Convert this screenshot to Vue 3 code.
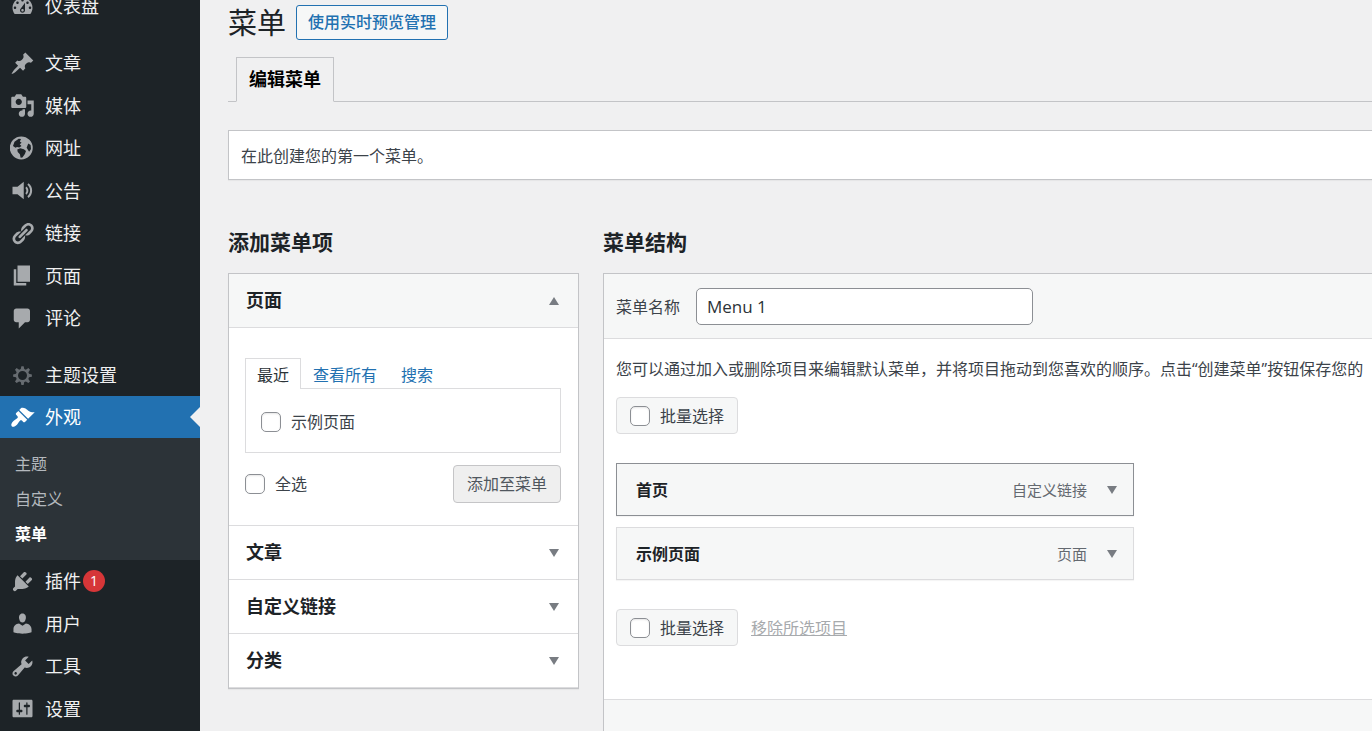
<script setup>
import { ref } from 'vue'

const icons = {
  dashboard: 'M3.76 16h12.48c1.11-1.37 1.76-3.12 1.76-5 0-4.42-3.58-8-8-8s-8 3.58-8 8c0 1.88.66 3.63 1.76 5zM10 4c.55 0 1 .45 1 1s-.45 1-1 1-1-.45-1-1 .45-1 1-1zM6 6c.55 0 1 .45 1 1s-.45 1-1 1-1-.45-1-1 .45-1 1-1zm8 0c.55 0 1 .45 1 1s-.45 1-1 1-1-.45-1-1 .45-1 1-1zm-5.37 5.55L12 7v6c0 1.1-.9 2-2 2s-2-.9-2-2c0-.57.24-1.08.63-1.45zM4 10c.55 0 1 .45 1 1s-.45 1-1 1-1-.45-1-1 .45-1 1-1zm12 0c.55 0 1 .45 1 1s-.45 1-1 1-1-.45-1-1 .45-1 1-1zm-5 3c0-.55-.45-1-1-1s-1 .45-1 1 .45 1 1 1 1-.45 1-1z',
  post: 'M10.44 3.02l1.82-1.82 6.36 6.35-1.83 1.82c-1.05-.68-2.48-.57-3.41.36l-.75.75c-.92.93-1.04 2.35-.35 3.41l-1.83 1.82-2.41-2.41-2.8 2.79c-.42.42-3.38 2.71-3.8 2.29s1.86-3.39 2.28-3.81l2.79-2.79L4.1 9.36l1.83-1.82c1.05.69 2.48.57 3.4-.36l.75-.75c.93-.92 1.05-2.35.36-3.41z',
  media: 'M13 11V4c0-.55-.45-1-1-1h-1.67L9 1H5L3.67 3H2c-.55 0-1 .45-1 1v7c0 .55.45 1 1 1h10c.55 0 1-.45 1-1zM7 4.5c1.38 0 2.5 1.12 2.5 2.5S8.38 9.5 7 9.5 4.5 8.38 4.5 7 5.62 4.5 7 4.5zM14 6h5v10.5c0 1.38-1.12 2.5-2.5 2.5S14 17.88 14 16.5s1.12-2.5 2.5-2.5c.17 0 .34.02.5.05V9h-3V6zm-4 8.05V13h2v3.5c0 1.38-1.12 2.5-2.5 2.5S7 17.88 7 16.5 8.12 14 9.5 14c.17 0 .34.02.5.05z',
  site: 'M9 .3a9.2 9.2 0 1 0 .01 18.4A9.2 9.2 0 0 0 9 .3zM2.400 8L3.600 4.600 7 2.200l1.800.2-.9 1.900 1.400 1-1.500 1.300 1.400 1.300-1.800 1.200L5.600 8.700 4.400 9.400zM5.800 10.800l2.400-1.100 2.900.8 1.700 1.500-.9 2.300-2 2.800-1.400.3-.6-2.800-1.700-1.900zM13.300 9.300l1.300-3.400 1.900 1.300.3 3.200-1.500 2.200z',
  volume: 'M2 7h4l5-4v14l-5-4H2zM12.300 7.900l.9-1.200c2 1.700 2 4.900 0 6.600l-.9-1.200c1.100-1.200 1.100-3 0-4.200zM13.900 5.400l.9-1.300c3.900 3 3.900 8.800 0 11.800l-.9-1.300c2.900-2.500 2.900-6.700 0-9.200z',
  links: 'M17.74 2.76c1.68 1.69 1.68 4.41 0 6.1l-1.53 1.52c-1.12 1.12-2.7 1.47-4.14 1.09l2.62-2.61.76-.77.76-.76c.84-.84.84-2.2 0-3.04-.84-.85-2.2-.85-3.04 0l-.77.76-3.38 3.38c-.37-1.44-.02-3.02 1.1-4.14l1.52-1.53c1.69-1.68 4.42-1.68 6.1 0zM8.59 13.43l5.34-5.34c.42-.42.42-1.1 0-1.52-.44-.43-1.13-.39-1.53 0l-5.33 5.34c-.42.42-.42 1.1 0 1.52.44.43 1.13.39 1.52 0zm-.76 2.29l4.14-4.15c.38 1.44.03 3.02-1.09 4.14l-1.52 1.53c-1.69 1.68-4.41 1.68-6.1 0-1.68-1.68-1.68-4.42 0-6.1l1.53-1.52c1.12-1.12 2.7-1.47 4.14-1.1l-4.14 4.15c-.85.84-.85 2.2 0 3.05.84.84 2.2.84 3.04 0z',
  page: 'M6 15V2h10v13H6zm-1 1h8v2H3V5h2v11z',
  comments: 'M5 2h9c1.1 0 2 .9 2 2v7c0 1.1-.9 2-2 2h-2l-5 5v-5H5c-1.1 0-2-.9-2-2V4c0-1.1.9-2 2-2z',
  gear: 'M9.100 2.500h1.800l.5 2.300 1.300.5 2-1.300 1.300 1.300-1.300 2 .5 1.300 2.300.5v1.800l-2.300.5-.5 1.300 1.300 2-1.300 1.300-2-1.300-1.300.5-.5 2.300H9.100l-.5-2.300-1.300-.5-2 1.300L4 14.700l1.300-2-.5-1.300-2.300-.5V9.100l2.300-.5.5-1.300L4 5.300 5.300 4l2 1.300 1.300-.5zM10 6.400a3.600 3.600 0 1 0 0 7.200 3.600 3.600 0 0 0 0-7.200z',
  appearance: 'M14.48 11.06L7.41 3.99l1.5-1.5c.5-.56 2.3-.47 3.51.32 1.21.8 1.43 1.28 2.91 2.1 1.18.64 2.45 1.26 4.45.85zm-.71.71L6.7 4.7 4.93 6.47c-.39.39-.39 1.02 0 1.41l1.06 1.06c.39.39.39 1.03 0 1.42-.6.6-1.43 1.11-2.21 1.69-.35.26-.7.53-1.01.84C1.43 14.23.4 16.08 1.4 17.07c.99 1 2.84-.03 4.18-1.36.31-.31.58-.66.85-1.02.57-.78 1.08-1.61 1.69-2.21.39-.39 1.02-.39 1.41 0l1.06 1.06c.39.39 1.02.39 1.41 0z',
  plugins: 'M13.11 4.36L9.87 7.6 8 5.73l3.24-3.24c.35-.34 1.05-.2 1.56.32.52.51.66 1.21.31 1.55zm-8 1.77l.91-1.12 9.01 9.01-1.19.84c-.71.71-2.63 1.16-3.82 1.16H6.14L4.9 17.26c-.59.59-1.54.59-2.12 0-.59-.58-.59-1.53 0-2.12l1.24-1.24v-3.88c0-1.13.4-3.19 1.09-3.89zm7.26 3.97l3.24-3.24c.34-.35 1.04-.21 1.55.31.52.51.66 1.21.31 1.55l-3.24 3.25z',
  users: 'M10 9.25c-2.27 0-2.73-3.44-2.73-3.44C7 4.02 7.82 2 9.97 2c2.16 0 2.98 2.02 2.71 3.81 0 0-.41 3.44-2.68 3.44zm0 2.57L12.72 10c2.39 0 4.52 2.33 4.52 4.53v2.49s-3.65 1.13-7.24 1.13c-3.65 0-7.24-1.13-7.24-1.13v-2.49c0-2.25 1.94-4.48 4.47-4.48z',
  tools: 'M16.68 9.77c-1.34 1.34-3.3 1.67-4.95.99l-5.41 6.52c-.99.99-2.59.99-3.58 0s-.99-2.59 0-3.57l6.52-5.42c-.68-1.65-.35-3.61.99-4.95 1.28-1.28 3.12-1.62 4.72-1.06l-2.89 2.89 2.82 2.82 2.86-2.87c.53 1.58.18 3.39-1.08 4.65zM3.81 16.21c.4.39 1.04.39 1.43 0 .4-.4.4-1.04 0-1.43-.39-.4-1.03-.4-1.43 0-.39.39-.39 1.03 0 1.43z',
  settings: 'M18 16V4c0-.55-.45-1-1-1H3c-.55 0-1 .45-1 1v12c0 .55.45 1 1 1h14c.55 0 1-.45 1-1zM8 11h1c.55 0 1 .45 1 1s-.45 1-1 1H8v1.5c0 .28-.22.5-.5.5s-.5-.22-.5-.5V13H6c-.55 0-1-.45-1-1s.45-1 1-1h1V5.5c0-.28.22-.5.5-.5s.5.22.5.5V11zm5-2h-1c-.55 0-1-.45-1-1s.45-1 1-1h1V5.5c0-.28.22-.5.5-.5s.5.22.5.5V7h1c.55 0 1 .45 1 1s-.45 1-1 1h-1v5.5c0 .28-.22.5-.5.5s-.5-.22-.5-.5V9z',
}

const groups = [
  [{ icon: 'dashboard', label: '仪表盘' }],
  [
    { icon: 'post', label: '文章' },
    { icon: 'media', label: '媒体' },
    { icon: 'site', label: '网址' },
    { icon: 'volume', label: '公告' },
    { icon: 'links', label: '链接' },
    { icon: 'page', label: '页面' },
    { icon: 'comments', label: '评论' },
  ],
  [
    { icon: 'gear', label: '主题设置', dim: true },
    { icon: 'appearance', label: '外观', current: true, children: ['主题', '自定义', '菜单'] },
    { icon: 'plugins', label: '插件', count: 1 },
    { icon: 'users', label: '用户' },
    { icon: 'tools', label: '工具' },
    { icon: 'settings', label: '设置' },
  ],
]

const closedSections = ['文章', '自定义链接', '分类']
const menuItems = [
  { title: '首页', type: '自定义链接', active: true },
  { title: '示例页面', type: '页面' },
]

const menuName = ref('Menu 1')
const samplePage = ref(false)
const selectAll = ref(false)
const bulkTop = ref(false)
const bulkBottom = ref(false)
</script>

<template>
  <div class="shell">
    <nav class="sidebar" aria-label="主菜单">
      <ul v-for="(group, g) in groups" :key="g" class="group">
        <li v-for="item in group" :key="item.label">
          <a href="#" class="nav-link" :class="{ current: item.current }">
            <svg class="nav-icon" :class="{ dim: item.dim }" viewBox="0 0 20 20" aria-hidden="true">
              <path :d="icons[item.icon]" fill-rule="evenodd" />
            </svg>
            <span>{{ item.label }}</span>
            <span v-if="item.count" class="badge">{{ item.count }}</span>
          </a>
          <ul v-if="item.children" class="submenu">
            <li v-for="child in item.children" :key="child">
              <a href="#" :class="{ selected: child === '菜单' }">{{ child }}</a>
            </li>
          </ul>
        </li>
      </ul>
    </nav>

    <main class="content">
      <header class="title-row">
        <h1>菜单</h1>
        <a href="#" class="preview-link">使用实时预览管理</a>
      </header>

      <nav class="page-tabs" aria-label="次要菜单">
        <a href="#" class="page-tab">编辑菜单</a>
      </nav>

      <p class="notice">在此创建您的第一个菜单。</p>

      <div class="columns">
        <section class="add-items">
          <h2>添加菜单项</h2>
          <div class="accordion">
            <button type="button" class="section-head open" aria-expanded="true">
              页面
              <svg class="arrow" viewBox="0 0 10 8" aria-hidden="true"><path d="M0 8L5 0l5 8z" /></svg>
            </button>
            <div class="section-body">
              <div class="tabs">
                <a href="#" class="tab active">最近</a>
                <a href="#" class="tab">查看所有</a>
                <a href="#" class="tab">搜索</a>
              </div>
              <div class="tab-panel">
                <label class="check"><input v-model="samplePage" type="checkbox" />示例页面</label>
              </div>
              <div class="actions">
                <label class="check"><input v-model="selectAll" type="checkbox" />全选</label>
                <button type="button" class="add-button">添加至菜单</button>
              </div>
            </div>
            <button
              v-for="name in closedSections"
              :key="name"
              type="button"
              class="section-head"
              aria-expanded="false"
            >
              {{ name }}
              <svg class="arrow" viewBox="0 0 10 8" aria-hidden="true"><path d="M0 0h10L5 8z" /></svg>
            </button>
          </div>
        </section>

        <section class="structure">
          <h2>菜单结构</h2>
          <div class="editor">
            <div class="editor-head">
              <label for="menu-name">菜单名称</label>
              <input id="menu-name" v-model="menuName" type="text" />
            </div>
            <div class="editor-body">
              <p class="hint">您可以通过加入或删除项目来编辑默认菜单，并将项目拖动到您喜欢的顺序。点击“创建菜单”按钮保存您的</p>
              <label class="check bulk"><input v-model="bulkTop" type="checkbox" />批量选择</label>
              <ul class="menu-items">
                <li v-for="item in menuItems" :key="item.title" class="menu-item" :class="{ active: item.active }">
                  <span class="item-title">{{ item.title }}</span>
                  <span class="item-type">{{ item.type }}</span>
                  <svg class="arrow" viewBox="0 0 10 8" aria-hidden="true"><path d="M0 0h10L5 8z" /></svg>
                </li>
              </ul>
              <div class="bulk-row">
                <label class="check bulk"><input v-model="bulkBottom" type="checkbox" />批量选择</label>
                <a href="#" class="remove-link">移除所选项目</a>
              </div>
            </div>
            <div class="editor-foot"></div>
          </div>
        </section>
      </div>
    </main>
  </div>
</template>

<style>
body {
  background: #f0f0f1;
}
</style>

<style scoped>
.shell,
.shell * {
  box-sizing: border-box;
}

.shell {
  display: flex;
  height: 100vh;
  overflow: hidden;
  background: #f0f0f1;
  color: #3c434a;
  font-family: "Open Sans", "Noto Sans CJK SC", sans-serif;
  font-size: 16px;
  line-height: 24px;
}

ul {
  margin: 0;
  padding: 0;
  list-style: none;
}

a {
  color: #2271b1;
  text-decoration: none;
}

button,
input {
  font: inherit;
}

h1,
h2,
p {
  margin: 0;
}

.sidebar {
  flex: 0 0 200px;
  background: #1d2327;
}

.group:first-child {
  margin-top: -15px;
}

.group + .group {
  margin-top: 15px;
}

.nav-link {
  position: relative;
  display: flex;
  align-items: center;
  height: 42px;
  padding-left: 10px;
  color: #f0f0f1;
  font-size: 18px;
}

.group > li:nth-child(even) > .nav-link {
  height: 43px;
}

.nav-link.current,
.group > li:nth-child(even) > .nav-link.current {
  height: 42px;
  background: #2271b1;
  color: #fff;
}

.nav-link.current::after {
  content: "";
  position: absolute;
  right: 0;
  top: 11px;
  border: 10px solid transparent;
  border-left-width: 0;
  border-right-color: #f0f0f1;
}

.nav-icon {
  width: 25px;
  height: 25px;
  margin-right: 10px;
  fill: #a7aaad;
}

.nav-icon.dim {
  fill: #666b70;
}

.current .nav-icon {
  fill: #fff;
}

.badge {
  min-width: 22px;
  height: 22px;
  margin-left: 2px;
  border-radius: 11px;
  background: #d63638;
  color: #fff;
  font-size: 14px;
  line-height: 22px;
  text-align: center;
}

.submenu {
  padding: 9px 0 8px;
  background: #2c3338;
}

.submenu a {
  display: block;
  padding: 5px 15px;
  color: #b4b9be;
  line-height: 25px;
}

.submenu a.selected {
  color: #fff;
  font-weight: 600;
}

.content {
  flex: 1;
  min-width: 0;
  padding: 5px 0 0 28px;
}

.title-row {
  display: flex;
  align-items: center;
  gap: 10px;
}

h1 {
  color: #1d2327;
  font-size: 29px;
  font-weight: 400;
  line-height: 35px;
}

.preview-link {
  padding: 5px 11px;
  border: 1px solid #2271b1;
  border-radius: 3px;
  background: #f6f7f7;
  font-weight: 500;
  line-height: 23px;
}

.page-tabs {
  display: flex;
  margin-top: 17px;
  padding-left: 8px;
  border-bottom: 1px solid #c3c4c7;
}

.page-tab {
  margin-bottom: -1px;
  padding: 8px 12px;
  border: 1px solid #c3c4c7;
  border-bottom-color: #f0f0f1;
  color: #000;
  font-size: 18px;
  font-weight: 600;
  line-height: 27px;
}

.notice {
  margin-top: 28px;
  padding: 13px 12px 11px;
  border: 1px solid #c3c4c7;
  border-right: 0;
  background: #fff;
  box-shadow: 0 1px 1px rgba(0, 0, 0, 0.04);
}

.columns {
  display: flex;
  gap: 24px;
  margin-top: 47px;
}

.add-items {
  flex: 0 0 351px;
}

.structure {
  flex: 1;
  min-width: 0;
}

h2 {
  margin-bottom: 16px;
  color: #1d2327;
  font-size: 21px;
  font-weight: 600;
  line-height: 30px;
}

.accordion {
  border: 1px solid #c3c4c7;
  background: #fff;
  box-shadow: 0 1px 1px rgba(0, 0, 0, 0.04);
}

.section-head {
  display: flex;
  align-items: center;
  justify-content: space-between;
  width: 100%;
  padding: 13px 19px 13px 17px;
  border: 0;
  border-bottom: 1px solid #dcdcde;
  background: #fff;
  color: #1d2327;
  font-size: 18px;
  font-weight: 600;
  line-height: 27px;
}

.section-head.open {
  background: #f6f7f7;
}

.arrow {
  width: 10px;
  height: 8px;
  fill: #787c82;
}

.section-body {
  padding: 30px 17px 22px 16px;
  border-bottom: 1px solid #dcdcde;
}

.tabs {
  display: flex;
}

.tab {
  padding: 4px 11px 1px;
  border: 1px solid transparent;
  border-bottom: 0;
}

.tab.active {
  margin-bottom: -1px;
  padding-bottom: 2px;
  border-color: #dcdcde;
  background: #fff;
  color: #2c3338;
}

.tab-panel {
  padding: 21px 15px 18px;
  border: 1px solid #dcdcde;
  line-height: 20px;
}

.check {
  display: flex;
  align-items: center;
  gap: 10px;
}

.check input {
  appearance: none;
  width: 20px;
  height: 20px;
  margin: 0;
  border: 1px solid #8c8f94;
  border-radius: 5px;
  background: #fff;
  box-shadow: inset 0 1px 2px rgba(0, 0, 0, 0.1);
}

.tab-panel .check {
  min-height: 24px;
}

.actions {
  display: flex;
  align-items: center;
  justify-content: space-between;
  margin-top: 12px;
}

.add-button {
  padding: 6px 13px;
  border: 1px solid #c5c5c7;
  border-radius: 4px;
  background: #efefef;
  color: #50575e;
}

.editor {
  border: 1px solid #c3c4c7;
  border-right: 0;
  background: #fff;
}

.editor-head {
  display: flex;
  align-items: center;
  gap: 16px;
  padding: 14px 12px 13px;
  border-bottom: 1px solid #dcdcde;
  background: #f6f7f7;
}

.editor-head input {
  width: 337px;
  height: 37px;
  padding: 0 10px;
  border: 1px solid #8c8f94;
  border-radius: 5px;
  background: #fff;
  color: #2c3338;
  font-size: 17px;
}

.editor-body {
  padding: 18px 0 53px 12px;
}

.hint {
  overflow: hidden;
  white-space: nowrap;
}

.bulk {
  width: fit-content;
  padding: 6px 13px 5px;
  border: 1px solid #dcdcde;
  border-radius: 4px;
  background: #f6f7f7;
}

.hint + .bulk {
  margin-top: 16px;
}

.menu-items {
  display: grid;
  gap: 11px;
  max-width: 518px;
  margin: 29px 0;
}

.menu-item {
  display: flex;
  align-items: center;
  padding: 14px 16px 13px 19px;
  border: 1px solid #dcdcde;
  background: #f6f7f7;
  box-shadow: 0 1px 1px rgba(0, 0, 0, 0.04);
}

.menu-item.active {
  border-color: #8c8f94;
}

.item-title {
  flex: 1;
  color: #1d2327;
  font-weight: 600;
}

.item-type {
  margin-right: 20px;
  color: #646970;
  font-size: 15px;
}

.bulk-row {
  display: flex;
  align-items: center;
  gap: 13px;
}

.remove-link {
  color: #a7aaad;
  text-decoration: underline;
}

.editor-foot {
  height: 60px;
  border-top: 1px solid #dcdcde;
  background: #f6f7f7;
}
</style>
